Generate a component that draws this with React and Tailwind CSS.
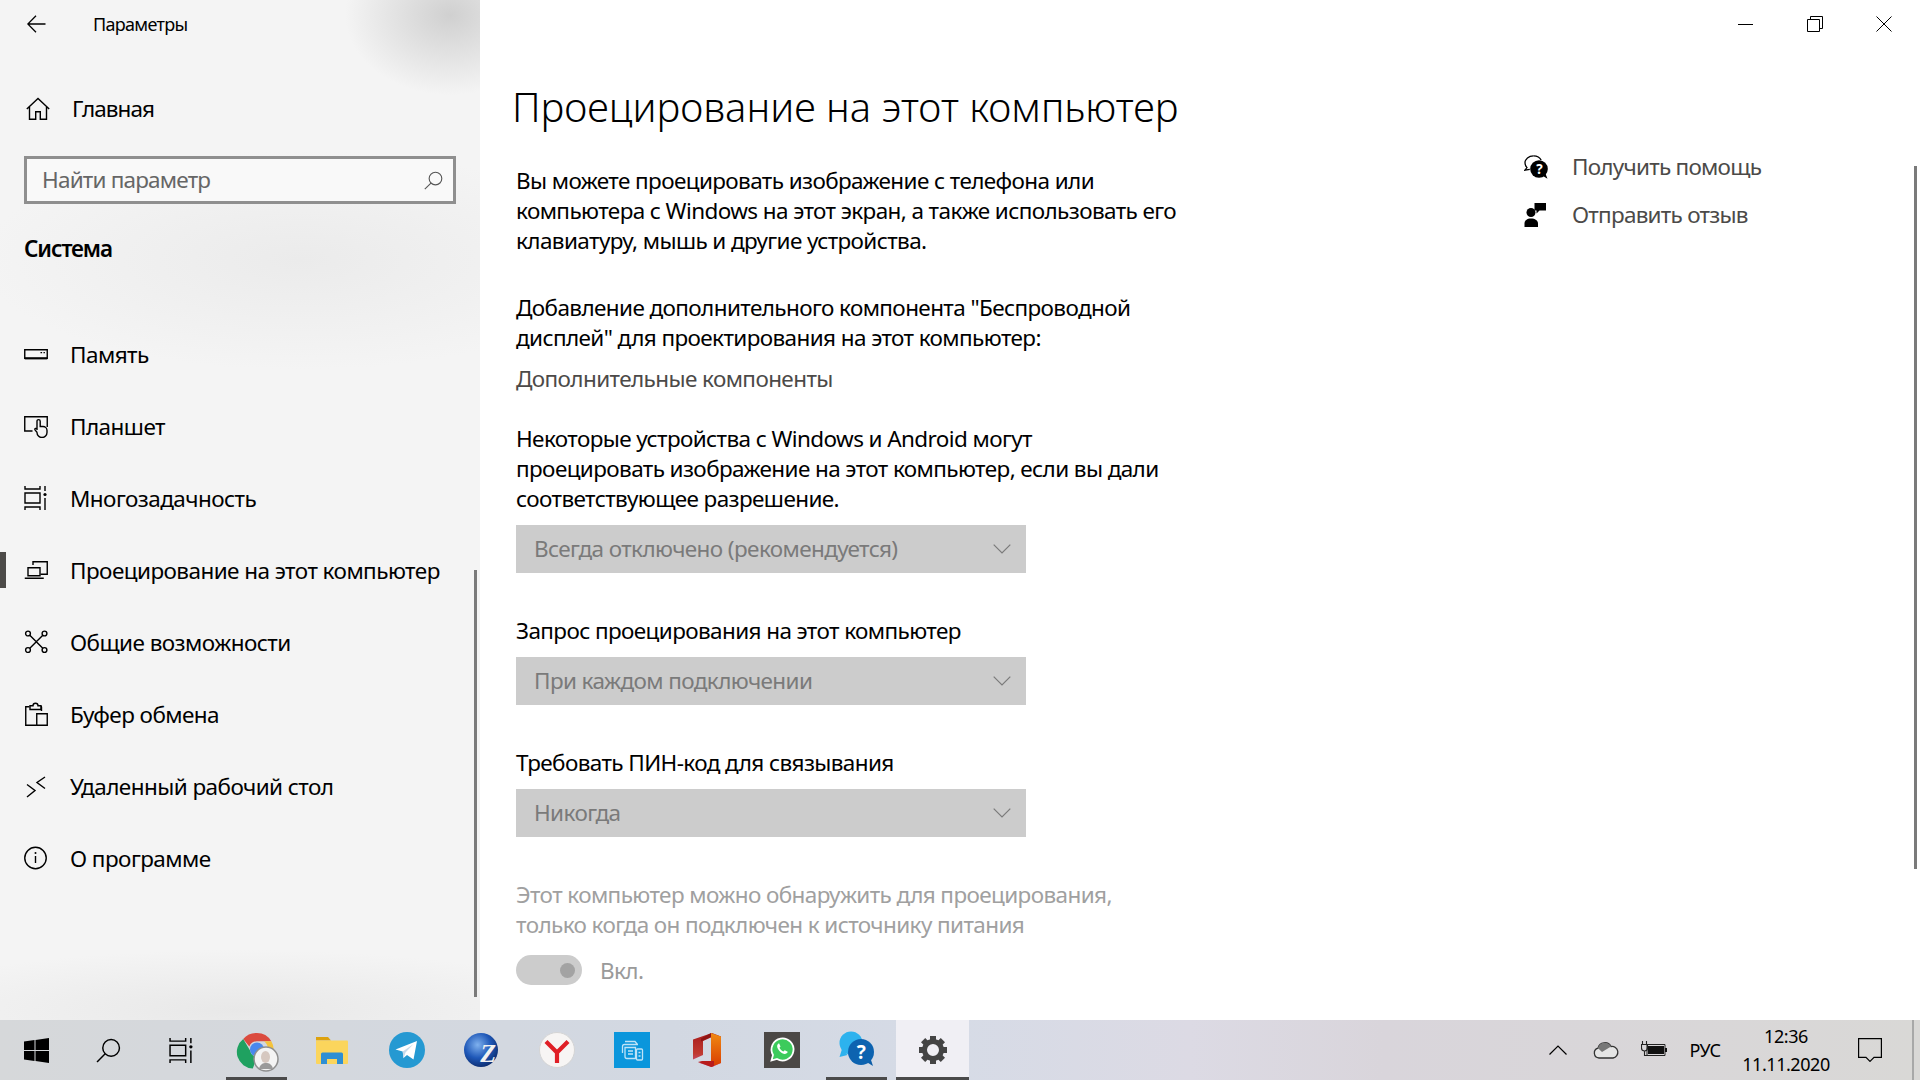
import React from "react";

const Stroke = ({ children, size = 24, className = "" }) => (
  <svg
    width={size}
    height={size}
    viewBox="0 0 24 24"
    fill="none"
    stroke="currentColor"
    strokeWidth="1.4"
    className={`shrink-0 ${className}`}
  >
    {children}
  </svg>
);

const MagnifierIcon = ({ size }) => (
  <Stroke size={size}>
    <circle cx="14.5" cy="9.5" r="8" />
    <path d="M8.8 15.2 1 23" />
  </Stroke>
);

const TaskViewIcon = ({ size }) => (
  <Stroke size={size}>
    <path d="M1 0v3h15V0M1 7h15v10H1zM1 24v-3h15v3M21 0v5M21 12v12" />
    <circle cx="21" cy="8.5" r="1.6" fill="currentColor" stroke="none" />
  </Stroke>
);

const navItems = [
  {
    label: "Память",
    icon: (
      <Stroke>
        <path d="M.75 7.75h22.5v8.5H.75z" />
        <path d="M.75 16.4h22.5" strokeWidth="2" />
        <path d="M16.5 10.6h1.6M19.5 10.6h1.4" />
      </Stroke>
    ),
  },
  {
    label: "Планшет",
    icon: (
      <Stroke>
        <path d="M8.5 17H.75V2.75h22.5V13" />
        <path d="M13 16V7.200a1.600 1.600 0 0 1 3.200 0V12.500h2.800a4 4 0 0 1 4 4v2a5 5 0 0 1-10 0c-.2-1.200-2.200-2-2.200-3.200 0-1 1.200-1.200 2.200-.5" />
      </Stroke>
    ),
  },
  { label: "Многозадачность", icon: <TaskViewIcon size={24} /> },
  {
    label: "Проецирование на этот компьютер",
    active: true,
    icon: (
      <Stroke>
        <path d="M9 7V3.75h14.25v12.5H16.5" />
        <path d="M4 9.75h12v8H4zM.75 20.25h19" />
      </Stroke>
    ),
  },
  {
    label: "Общие возможности",
    icon: (
      <Stroke>
        <circle cx="4" cy="3.5" r="2.4" />
        <circle cx="20.5" cy="3.5" r="2.4" />
        <circle cx="4" cy="20" r="2.4" />
        <circle cx="20.5" cy="20" r="2.4" />
        <path d="M5.8 5.2 18.8 18.3M18.8 5.2 5.8 18.3" />
      </Stroke>
    ),
  },
  {
    label: "Буфер обмена",
    icon: (
      <Stroke>
        <path d="M5.5 4.75H1.75v18.5H12M18 4.75h-.5V9" />
        <path d="M12.75 11.75h10.5v11.5h-10.5zM6 7.5V3.75h3a2.5 2.5 0 0 1 5 0h3v3.75z" />
      </Stroke>
    ),
  },
  {
    label: "Удаленный рабочий стол",
    icon: (
      <Stroke>
        <path d="m3 10.5 8 6-8 6.500M21 3l-8 5.500 8 6" />
      </Stroke>
    ),
  },
  {
    label: "О программе",
    icon: (
      <Stroke>
        <circle cx="11.5" cy="12" r="10.75" />
        <path d="M11.500 10v7" />
        <circle cx="11.500" cy="7" r="1" fill="currentColor" stroke="none" />
      </Stroke>
    ),
  },
];

const Sidebar = () => (
  <aside className="relative w-[480px] shrink-0 bg-[#f4f4f4] bg-[image:radial-gradient(ellipse_105px_80px_at_450px_15px,#d0d0d0,transparent),radial-gradient(ellipse_320px_110px_at_300px_260px,#ebebeb,transparent),radial-gradient(ellipse_360px_60px_at_240px_1010px,#e8e8e8,transparent)]">
    <div className="flex h-12 items-center pl-[27px] text-black">
      <svg width="19" height="18" viewBox="0 0 19 18" fill="none" stroke="currentColor" strokeWidth="1.3">
        <path d="M.5 9h18M9 .8.8 9 9 17.2" />
      </svg>
      <span className="ml-[47px] text-[18px] tracking-[-0.7px]">Параметры</span>
    </div>
    <div className="mt-[25px] flex h-[72px] items-center pl-[26px]">
      <Stroke size={24}>
        <path d="M.8 12 12 1.5 23.2 12M3.5 10v12.2h6.2v-7.5h4.6v7.5h6.2V10" />
      </Stroke>
      <span className="ml-[22px] text-[22.5px] tracking-[-0.9px] text-black">Главная</span>
    </div>
    <div className="mx-6 mt-[11px] flex h-12 items-center justify-between border-[3px] border-[#8f8f8f] bg-[#f9f9f9] pl-[15px] pr-[10px]">
      <span className="text-[22.5px] tracking-[-0.8px] text-[#666]">Найти параметр</span>
      <span className="text-[#555]">
        <MagnifierIcon size={19} />
      </span>
    </div>
    <div className="ml-6 mt-[22px] flex h-[46px] items-center text-[22.5px] font-semibold tracking-[-1.1px] text-black">
      Система
    </div>
    <nav className="mt-[46px] tracking-[-0.55px]">
      {navItems.map((item) => (
        <div key={item.label} className="relative flex h-[72px] items-center pl-6 text-black">
          {item.active && <div className="absolute left-0 top-[18px] h-9 w-[6px] bg-[#4c4a48]" />}
          {item.icon}
          <span className="ml-[22px] mt-[2px] text-[22.5px]">{item.label}</span>
        </div>
      ))}
    </nav>
    <div className="absolute left-[474px] top-[570px] h-[427px] w-[3px] bg-[#7a7a7a]" />
  </aside>
);

const Dropdown = ({ value }) => (
  <div className="flex h-12 w-[510px] items-center justify-between bg-[#cccccc] pl-[18px] pr-[15px] text-[22.5px] text-[#7a7a7a]">
    <span>{value}</span>
    <svg width="18" height="10" viewBox="0 0 18 10" fill="none" stroke="#7a7a7a" strokeWidth="1.2">
      <path d="m.7.7 8.3 8.3L17.3.7" />
    </svg>
  </div>
);

const WindowControls = () => (
  <div className="flex h-12 justify-end pr-[2px] text-black">
    <div className="flex w-[69px] items-center justify-center">
      <div className="h-px w-[15px] bg-black" />
    </div>
    <div className="flex w-[69px] items-center justify-center">
      <svg width="16" height="16" viewBox="0 0 16 16" fill="none" stroke="currentColor">
        <path d="M.5 3.5h12v12H.5zM3.5 3.5V.5h12v12h-3" />
      </svg>
    </div>
    <div className="flex w-[69px] items-center justify-center">
      <svg width="16" height="16" viewBox="0 0 16 16" fill="none" stroke="currentColor">
        <path d="m.5.5 15 15M15.500.5l-15 15" />
      </svg>
    </div>
  </div>
);

const Main = () => (
  <main className="relative flex-1 bg-white tracking-[-0.6px]">
    <WindowControls />
    <div className="flex">
      <div className="flex-1 pl-[36px]">
        <h1 className="-ml-1 mt-[29px] h-[60px] text-[40px] font-light leading-[60px] tracking-[0px] text-black">
          Проецирование на этот компьютер
        </h1>
        <div className="mt-[29px] text-[22.5px] leading-[30px] text-black">
          <p>
            Вы можете проецировать изображение с телефона или
            <br />
            компьютера с Windows на этот экран, а также использовать его
            <br />
            клавиатуру, мышь и другие устройства.
          </p>
          <p className="mt-[37px]">
            Добавление дополнительного компонента "Беспроводной
            <br />
            дисплей" для проектирования на этот компьютер:
          </p>
          <p className="mt-[11px] text-[#4c4a48]">Дополнительные компоненты</p>
          <p className="mt-[30px]">
            Некоторые устройства с Windows и Android могут
            <br />
            проецировать изображение на этот компьютер, если вы дали
            <br />
            соответствующее разрешение.
          </p>
          <div className="mt-[11px]">
            <Dropdown value="Всегда отключено (рекомендуется)" />
          </div>
          <p className="mt-[43px]">Запрос проецирования на этот компьютер</p>
          <div className="mt-[11px]">
            <Dropdown value="При каждом подключении" />
          </div>
          <p className="mt-[43px]">Требовать ПИН-код для связывания</p>
          <div className="mt-[11px]">
            <Dropdown value="Никогда" />
          </div>
          <p className="mt-[43px] text-[#a0a0a0]">
            Этот компьютер можно обнаружить для проецирования,
            <br />
            только когда он подключен к источнику питания
          </p>
          <div className="mt-[14px] flex items-center">
            <div className="flex h-[30px] w-[66px] items-center justify-end rounded-full bg-[#cccccc] pr-[7px]">
              <div className="h-[15px] w-[15px] rounded-full bg-[#a3a3a3]" />
            </div>
            <span className="ml-[18px] mt-[2px] text-[#9a9a9a]">Вкл.</span>
          </div>
        </div>
      </div>
      <div className="w-[396px] pt-[95px] text-[22.5px] tracking-[-0.75px] text-[#4c4a48]">
        <div className="flex h-12 items-center">
          <svg width="24" height="24" viewBox="0 0 24 24" className="shrink-0 text-black">
            <path d="M9.500.9C4.700.900 1 4 1 8c0 1.800.8 3.400 2 4.600L.8 15.200l5-.9" fill="none" stroke="currentColor" strokeWidth="1.3" />
            <path d="M9.500.9c3.500 0 6.500 1.700 7.700 4.300" fill="none" stroke="currentColor" strokeWidth="1.300" />
            <circle cx="15" cy="14" r="8.800" fill="currentColor" />
            <path d="m19 21 4.500 2.700-2-5z" fill="currentColor" />
            <text x="15" y="18.800" textAnchor="middle" fontSize="13.500" fontWeight="700" fill="#fff" fontFamily="Noto Sans">?</text>
          </svg>
          <span className="ml-6">Получить помощь</span>
        </div>
        <div className="flex h-12 items-center">
          <svg width="24" height="24" viewBox="0 0 24 24" className="shrink-0 text-black">
            <circle cx="7" cy="9.500" r="4.500" fill="currentColor" />
            <path d="M.5 24v-3.500c0-3 2.500-5 6.500-5s7 2 7 5V24z" fill="currentColor" />
            <path d="M10.500 0H22v7.500h-6.500l-3 3V7.500h-2z" fill="currentColor" />
          </svg>
          <span className="ml-6">Отправить отзыв</span>
        </div>
      </div>
    </div>
    <div className="absolute right-[3px] top-[166px] h-[703px] w-[3px] bg-[#7a7a7a]" />
  </main>
);

const taskbarApps = [
  {
    name: "chrome",
    running: true,
    svg: (
      <svg width="44" height="44" viewBox="-1 0 44 44">
        <path d="M21 5a16.500 16.500 0 0 1 14.300 8.250H21a8.300 8.300 0 0 0-7.700 5.200L7.200 11A16.500 16.500 0 0 1 21 5z" fill="#db4b3f" />
        <path d="M7.200 11l7 11.800a7.500 7.500 0 0 0 7 6l-4.400 11.700A16.500 16.500 0 0 1 7.200 11z" fill="#1fa160" />
        <path d="M35.300 13.250A16.500 16.500 0 0 1 24 38l5-12a8 8 0 0 0-1-12.750z" fill="#f5c33b" />
        <circle cx="21" cy="21.500" r="7" fill="#4a88ee" />
        <circle cx="30" cy="31" r="12" fill="#f4f4f4" />
        <circle cx="30" cy="31" r="12" fill="none" stroke="#8f8f8f" strokeWidth="1.500" />
        <ellipse cx="29.500" cy="29" rx="4.500" ry="6" fill="#d6c8c0" />
        <path d="M23 41c1-5 4-6 7-6s6 1 7 6z" fill="#9a9a9a" />
      </svg>
    ),
  },
  {
    name: "explorer",
    svg: (
      <svg width="36" height="36" viewBox="0 0 36 36">
        <path d="M2 5h12l3 3.500H2z" fill="#dda20f" />
        <path d="M2 8.500h31a1 1 0 0 1 1 1V31a1 1 0 0 1-1 1H3a1 1 0 0 1-1-1z" fill="#fbd55c" />
        <path d="M7 32V22a1.500 1.500 0 0 1 1.500-1.500h19A1.500 1.500 0 0 1 29 22v10h-6v-5H13v5z" fill="#2e8fd4" />
      </svg>
    ),
  },
  {
    name: "telegram",
    svg: (
      <svg width="36" height="36" viewBox="0 0 36 36">
        <circle cx="18" cy="18" r="18" fill="#2599d2" />
        <path d="M6.500 17.500 28 9l-3.500 18.500-6.500-4.500-3.500 3-.8-6.500z" fill="#fff" />
        <path d="m13.700 19.500 10.800-7.500-8 8.500-2 6z" fill="#c8daea" />
      </svg>
    ),
  },
  {
    name: "zeta",
    svg: (
      <svg width="36" height="36" viewBox="0 0 36 36">
        <defs>
          <radialGradient id="zetaGlobe" cx="0.4" cy="0.35" r="0.7">
            <stop offset="0" stopColor="#7fb1ee" />
            <stop offset="0.55" stopColor="#1f58b8" />
            <stop offset="1" stopColor="#0b2a6b" />
          </radialGradient>
        </defs>
        <circle cx="17" cy="18" r="17" fill="url(#zetaGlobe)" />
        <text x="24" y="30" textAnchor="middle" fontSize="26" fontWeight="700" fontStyle="italic" fill="#f1f1f1" fontFamily="Liberation Serif">Z</text>
      </svg>
    ),
  },
  {
    name: "yandex",
    svg: (
      <svg width="36" height="36" viewBox="0 0 36 36">
        <circle cx="18" cy="18" r="17.500" fill="#f7f5f4" stroke="#d4d4d4" />
        <path d="M7 9.500 18 20.500 29 9.500M18 20v11" fill="none" stroke="#e01f26" strokeWidth="4.200" />
      </svg>
    ),
  },
  {
    name: "devices",
    svg: (
      <svg width="36" height="36" viewBox="0 0 36 36">
        <rect width="36" height="36" fill="#0a96dc" />
        <g fill="none" stroke="#bfe3f7" strokeWidth="1.300">
          <path d="M11 9.500h10l2.500 3M8.500 21v-6.500a2 2 0 0 1 2-2H24" />
          <path d="M11 15.500h10.500v11H13a2 2 0 0 1-2-2z" />
          <rect x="22.500" y="17" width="6" height="11" rx="1" />
          <path d="M14 19h5M14 22h5M24.500 20.500h2M24.500 24h2" />
        </g>
      </svg>
    ),
  },
  {
    name: "office",
    svg: (
      <svg width="36" height="36" viewBox="0 0 36 36">
        <defs>
          <linearGradient id="officeLeft" x1="0" y1="0" x2="0" y2="1">
            <stop offset="0" stopColor="#a81c1c" />
            <stop offset="0.6" stopColor="#c0392f" />
            <stop offset="1" stopColor="#c95a9a" />
          </linearGradient>
          <linearGradient id="officeRight" x1="0" y1="0" x2="0" y2="1">
            <stop offset="0" stopColor="#f08a12" />
            <stop offset="1" stopColor="#d83b01" />
          </linearGradient>
        </defs>
        <path d="M23 1 32 4.500V31l-9 4-14-4.500 14 1.500V5l-9 4v14l-10 4.500V7.500z" fill="url(#officeLeft)" />
        <path d="M22 1 32 4.500V31l-10 4z" fill="url(#officeRight)" />
        <path d="M9 30l13 5 3-1V29H13z" fill="#b81c1c" />
        <path d="M22 1 12 6.500v3L22 5z" fill="#8f1414" />
      </svg>
    ),
  },
  {
    name: "whatsapp",
    svg: (
      <svg width="36" height="36" viewBox="0 0 36 36">
        <rect width="36" height="36" fill="#4b4846" />
        <path d="M7.500 28.500 9 23a11 11 0 1 1 4 4z" fill="#3ccb5c" stroke="#fff" strokeWidth="1.800" />
        <path d="M14.500 11.500c-1.500 1-2 3-.5 5.500 1.800 3 4.200 4.800 6.500 5 1.500.100 3-1 3.200-2.300l-3-1.500-1.200 1.300c-1.800-.6-3.200-2-4-3.800l1-1.300-1.300-3z" fill="#fff" />
      </svg>
    ),
  },
  {
    name: "help",
    running: true,
    svg: (
      <svg width="40" height="40" viewBox="0 0 40 40">
        <circle cx="14" cy="13" r="11.500" fill="#2db2ee" />
        <path d="M5 19 2.500 27l8-2z" fill="#2db2ee" />
        <path d="M28 31l8 5-3-9z" fill="#0d5ea8" />
        <circle cx="24" cy="22" r="13" fill="#0d63b0" />
        <text x="24" y="29" textAnchor="middle" fontSize="19" fontWeight="700" fill="#fff" fontFamily="Noto Sans">?</text>
      </svg>
    ),
  },
];

const GEAR_TEETH = [0, 45, 90, 135, 180, 225, 270, 315];

const Taskbar = () => (
  <footer className="flex h-[60px] items-stretch bg-[linear-gradient(90deg,#d6d8da_0%,#d2d8e2_35%,#d6dbe6_50%,#dcdae4_62%,#d9d5db_72%,#d9d8d6_100%)] text-black">
    <div className="flex w-[72px] items-center justify-center">
      <svg width="25" height="25" viewBox="0 0 25 25" fill="currentColor">
        <path d="M0 3.500 10.500 2v10H0zM11.500 1.900 25 0v12h-13.500zM0 13h10.500v10L0 21.500zM11.500 13H25v12l-13.500-1.900z" />
      </svg>
    </div>
    <div className="flex w-[72px] items-center justify-center">
      <MagnifierIcon size={25} />
    </div>
    <div className="flex w-[75px] items-center justify-center">
      <TaskViewIcon size={25} />
    </div>
    {taskbarApps.map((app) => (
      <div key={app.name} className="relative flex w-[75px] items-center justify-center">
        {app.svg}
        {app.running && <div className="absolute inset-x-[7px] bottom-0 h-[3px] bg-[#4a4a4a]" />}
      </div>
    ))}
    <div className="relative ml-[2px] flex w-[73px] items-center justify-center bg-[#f0eff4]">
      <svg width="30" height="30" viewBox="0 0 30 30">
        {GEAR_TEETH.map((deg) => (
          <rect key={deg} x="12" y="1" width="6" height="6" fill="#444" transform={`rotate(${deg} 15 15)`} />
        ))}
        <circle cx="15" cy="15" r="8.500" fill="none" stroke="#444" strokeWidth="5" />
      </svg>
      <div className="absolute inset-x-0 bottom-0 h-[3px] bg-[#4a4a4a]" />
    </div>
    <div className="ml-auto flex items-center">
      <div className="flex w-12 items-center justify-center">
        <svg width="18" height="10" viewBox="0 0 18 10" fill="none" stroke="currentColor" strokeWidth="1.200">
          <path d="M.5 9.500 9 1l8.500 8.500" />
        </svg>
      </div>
      <div className="flex w-12 items-center justify-center">
        <svg width="26" height="18" viewBox="0 0 26 18">
          <path d="M6 17a5 5 0 0 1-1-9.800A7 7 0 0 1 18 5.500a5.500 5.500 0 0 1 2 11.500z" fill="#e5e5e5" stroke="#333" strokeWidth="1.300" />
          <path d="M5 7.200A7 7 0 0 1 18 5.500L9 11z" fill="#777" />
        </svg>
      </div>
      <div className="flex w-12 items-center justify-center">
        <svg width="26" height="18" viewBox="0 0 26 18">
          <path d="M1.500 0v3.500M5.500 0v3.500M.5 3.500h6V7a3 3 0 0 1-6 0zM3.500 10v4.500H6" fill="none" stroke="#222" strokeWidth="1.100" />
          <path d="M6 3.500h18v11H6z" fill="none" stroke="#222" strokeWidth="1" />
          <path d="M7 5h16v8H7zM24 7h2v4h-2z" fill="#111" />
        </svg>
      </div>
      <div className="w-[54px] text-center text-[18px]">РУС</div>
      <div className="w-[108px] text-center text-[18px] leading-[28px]">
        <div>12:36</div>
        <div>11.11.2020</div>
      </div>
      <div className="flex w-[60px] items-center justify-center">
        <svg width="24" height="24" viewBox="0 0 24 24" fill="none" stroke="currentColor" strokeWidth="1.200">
          <path d="M.6.600h22.800v18.800H16l-4 4-4-4H.6z" />
        </svg>
      </div>
      <div className="ml-3 h-full w-2 border-l-2 border-[#a8a8a8]" />
    </div>
  </footer>
);

const App = () => (
  <div className="flex h-screen w-full flex-col overflow-hidden font-['Noto_Sans',sans-serif] tracking-[-0.45px]">
    <div className="flex h-[1020px]">
      <Sidebar />
      <Main />
    </div>
    <Taskbar />
  </div>
);

export default App;
